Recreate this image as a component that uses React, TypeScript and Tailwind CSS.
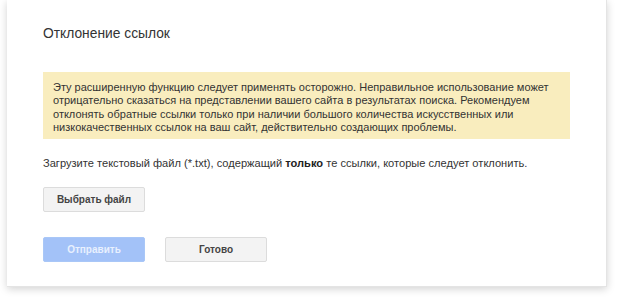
const App = () => {
  return (
    <div className="w-[625px] h-[297px] bg-white pl-[7px] overflow-hidden font-['Liberation_Sans',Arial,sans-serif]">
      <div className="w-[600px] h-[287px] bg-white border-r border-b border-[#e4e4e4] shadow-[0_2px_8px_rgba(0,0,0,0.18)] pl-[36px] pt-[24px]">
        <h1 className="text-[13.8px] leading-[20px] text-[#333]">Отклонение ссылок</h1>

        <div className="mt-[28px] w-[527px] h-[67px] bg-[#f9edbe] pl-[10px] pr-[8px] pt-[9px] text-[11px] leading-[13.3px] text-[#333]">
          Эту расширенную функцию следует применять осторожно. Неправильное использование может
          отрицательно сказаться на представлении вашего сайта в результатах поиска. Рекомендуем
          отклонять обратные ссылки только при наличии большого количества искусственных или
          низкокачественных ссылок на ваш сайт, действительно создающих проблемы.
        </div>

        <p className="mt-[16px] text-[11.1px] leading-[16px] text-[#333]">
          Загрузите текстовый файл (*.txt), содержащий <b className="text-[#222]">только</b> те ссылки, которые следует отклонить.
        </p>

        <button className="mt-[16px] w-[102px] h-[25px] rounded-[2px] border border-[#dcdcdc] bg-[#f3f3f3] text-[10px] font-bold text-[#444]">
          Выбрать файл
        </button>

        <div className="mt-[25px] flex gap-[20px]">
          <button className="w-[102px] h-[25px] rounded-[2px] border border-[#a9c7f7] bg-[#a3c2f8] text-[10px] font-bold text-[#e8f0fe]">
            Отправить
          </button>
          <button className="w-[102px] h-[25px] rounded-[2px] border border-[#dcdcdc] bg-[#f3f3f3] text-[10px] font-bold text-[#444]">
            Готово
          </button>
        </div>
      </div>
    </div>
  );
};

export default App;
